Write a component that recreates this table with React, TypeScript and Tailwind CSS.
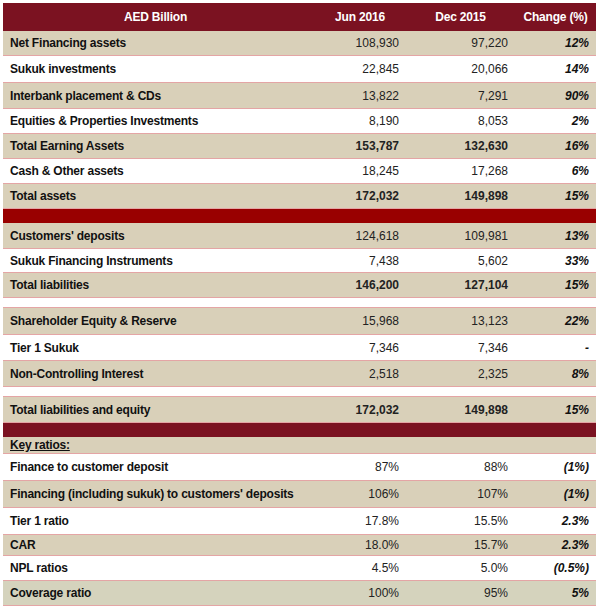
import React from 'react';

type RowKind = 'beige' | 'white' | 'green';

interface DataRow {
  label: string;
  jun: string;
  dec: string;
  change: string;
  kind: RowKind;
  h: string;
  bold?: boolean;
}

const bgFor: Record<RowKind, string> = {
  beige: 'bg-[#d9d0b9]',
  white: 'bg-white',
  green: 'bg-[#d5d3bd]',
};

const assets: DataRow[] = [
  { label: 'Net Financing assets', jun: '108,930', dec: '97,220', change: '12%', kind: 'beige', h: 'h-[25px]' },
  { label: 'Sukuk investments', jun: '22,845', dec: '20,066', change: '14%', kind: 'white', h: 'h-[27px]' },
  { label: 'Interbank placement & CDs', jun: '13,822', dec: '7,291', change: '90%', kind: 'beige', h: 'h-[26px]' },
  { label: 'Equities & Properties Investments', jun: '8,190', dec: '8,053', change: '2%', kind: 'white', h: 'h-[25px]' },
  { label: 'Total Earning Assets', jun: '153,787', dec: '132,630', change: '16%', kind: 'beige', h: 'h-[25px]', bold: true },
  { label: 'Cash & Other assets', jun: '18,245', dec: '17,268', change: '6%', kind: 'white', h: 'h-[25px]' },
  { label: 'Total assets', jun: '172,032', dec: '149,898', change: '15%', kind: 'beige', h: 'h-[25px]', bold: true },
];

const liabilities: DataRow[] = [
  { label: "Customers' deposits", jun: '124,618', dec: '109,981', change: '13%', kind: 'beige', h: 'h-[26px]' },
  { label: 'Sukuk Financing Instruments', jun: '7,438', dec: '5,602', change: '33%', kind: 'white', h: 'h-[24px]' },
  { label: 'Total liabilities', jun: '146,200', dec: '127,104', change: '15%', kind: 'beige', h: 'h-[25px]', bold: true },
];

const equity: DataRow[] = [
  { label: 'Shareholder Equity & Reserve', jun: '15,968', dec: '13,123', change: '22%', kind: 'beige', h: 'h-[27px]' },
  { label: 'Tier 1 Sukuk', jun: '7,346', dec: '7,346', change: '-', kind: 'white', h: 'h-[26px]' },
  { label: 'Non-Controlling Interest', jun: '2,518', dec: '2,325', change: '8%', kind: 'beige', h: 'h-[26px]' },
];

const ratios: DataRow[] = [
  { label: 'Finance to customer deposit', jun: '87%', dec: '88%', change: '(1%)', kind: 'white', h: 'h-[27px]' },
  { label: "Financing (including sukuk) to customers' deposits", jun: '106%', dec: '107%', change: '(1%)', kind: 'beige', h: 'h-[27px]' },
  { label: 'Tier 1 ratio', jun: '17.8%', dec: '15.5%', change: '2.3%', kind: 'white', h: 'h-[27px]' },
  { label: 'CAR', jun: '18.0%', dec: '15.7%', change: '2.3%', kind: 'beige', h: 'h-[21px]' },
  { label: 'NPL ratios', jun: '4.5%', dec: '5.0%', change: '(0.5%)', kind: 'white', h: 'h-[25px]' },
  { label: 'Coverage ratio', jun: '100%', dec: '95%', change: '5%', kind: 'green', h: 'h-[25px]' },
];

const cols = 'grid grid-cols-[311px_92px_109px_81px] items-center';

const Row = ({ row }: { row: DataRow }) => (
  <div className={`${cols} ${row.h} ${bgFor[row.kind]} border-b border-[#e4a5a5] text-[12px] text-[#111]`}>
    <div className="pl-[7px] font-bold tracking-[-0.2px] whitespace-nowrap">{row.label}</div>
    <div className={`pr-[7px] text-right text-[#222] ${row.bold ? 'font-bold' : ''}`}>{row.jun}</div>
    <div className={`pr-[7px] text-right text-[#222] ${row.bold ? 'font-bold' : ''}`}>{row.dec}</div>
    <div className="pr-[7px] text-right font-bold italic">{row.change}</div>
  </div>
);

const Spacer = () => <div className="h-[10px] bg-white border-b border-[#e4a5a5]" />;

export default function App() {
  return (
    <div className="w-[600px] h-[611px] bg-white pt-[3px] pl-[3px]" style={{ fontFamily: '"Liberation Sans", Arial, sans-serif' }}>
      <div className="w-[593px]">
        <div className={`${cols} h-[28px] bg-[#7b1221] text-white text-[12px] font-bold tracking-[-0.2px]`}>
          <div className="text-center pr-[6px]">AED Billion</div>
          <div className="text-center">Jun 2016</div>
          <div className="text-center">Dec 2015</div>
          <div className="text-center">Change (%)</div>
        </div>
        {assets.map((r) => <Row key={r.label} row={r} />)}
        <div className="h-[14px] bg-[#990000]" />
        {liabilities.map((r) => <Row key={r.label} row={r} />)}
        <Spacer />
        {equity.map((r) => <Row key={r.label} row={r} />)}
        <Spacer />
        <Row row={{ label: 'Total liabilities and equity', jun: '172,032', dec: '149,898', change: '15%', kind: 'beige', h: 'h-[26px]', bold: true }} />
        <div className="h-[14px] bg-[#7b1221]" />
        <div className="h-[17px] bg-[#d9d0b9] border-b border-[#e4a5a5] flex items-center pl-[7px] text-[12px] font-bold tracking-[-0.2px] text-[#111]">
          <span className="underline">Key ratios:</span>
        </div>
        {ratios.map((r) => <Row key={r.label} row={r} />)}
      </div>
    </div>
  );
}
